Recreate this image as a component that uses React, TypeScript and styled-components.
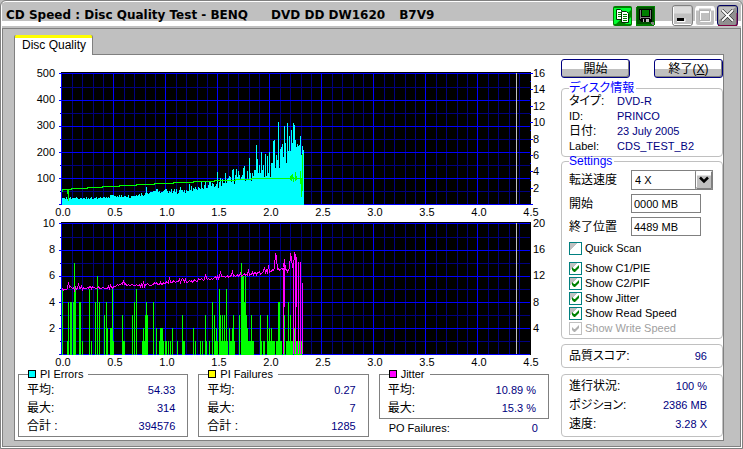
import React, { useState } from 'react';
import styled, { createGlobalStyle, css } from 'styled-components';

const GlobalStyle = createGlobalStyle`
  *, *::before, *::after { box-sizing: border-box; }
  body {
    margin: 0;
    background: #c0c0c0;
    color: #000;
    font: 11px/15px "Liberation Sans", "Noto Sans CJK JP", sans-serif;
    font-feature-settings: "palt";
  }
  button, input, select { font: inherit; color: inherit; margin: 0; border-radius: 0; }
`;

/* ---------- window frame ---------- */

const Window = styled.div`
  min-height: 100vh;
  display: flex;
  flex-direction: column;
  border: 1px solid #808080;
  border-radius: 6px 6px 0 0;
  box-shadow: inset 0 0 0 1px #fff;
  padding: 2px 1px 1px;
`;

const TitleBar = styled.header`
  display: flex;
  align-items: center;
  height: 25px;
  padding: 0 3px 0 4px;
  background: linear-gradient(#c0c0c0 0 18px, #fff 18px 23px, #c0c0c0 23px);
`;

const Title = styled.h1`
  flex: 1;
  display: flex;
  margin: 0;
  font-family: "DejaVu Sans", sans-serif;
  font-size: 12px;
  line-height: 25px;
  font-weight: bold;
  white-space: nowrap;
`;

const Model = styled.span`
  padding: 0 14px 0 23px;
`;

const TitleTools = styled.div`
  display: flex;
  gap: 4px;
  margin-right: 17px;
`;

const TitleControls = styled.div`
  display: flex;
  gap: 2px;
`;

const IconButton = styled.button`
  display: block;
  padding: 0;
  border: 0;
  background: none;
  svg { display: block; }
`;

const Client = styled.main`
  flex: 1;
  display: flex;
  flex-direction: column;
  padding: 6px 16px 5px 11px;
  background: #c0c0c0;
  border: 1px solid #808080;
`;

const Tab = styled.button`
  align-self: flex-start;
  height: 20px;
  margin-bottom: -1px;
  padding: 0 7px;
  width: 79px;
  border: 1px solid #808080;
  border-top: 0;
  border-bottom: 0;
  border-radius: 2px 2px 0 0;
  background: linear-gradient(#ffff00 0 3px, #fff 3px);
  text-align: left;
  white-space: nowrap;
  font-size: 12px;
  line-height: 20px;
  z-index: 1;
`;

const Page = styled.section`
  flex: 1;
  display: flex;
  gap: 12px;
  padding: 4px 0 3px 3px;
  border: 1px solid #808080;
  background: #fff;
`;

const Results = styled.div`
  flex: 1;
  min-width: 0;
  padding-top: 8px;
`;

const Sidebar = styled.aside`
  width: 162px;
  flex: none;
  display: flex;
  flex-direction: column;
`;

/* ---------- charts ---------- */

const ChartSvg = styled.svg`
  display: block;
  width: 100%;
  height: auto;
  overflow: visible;
  font-size: 11px;
`;

const PLOT_X = 43;
const PLOT_Y = 5;
const PLOT_W = 470;
const PLOT_H = 133;
const BASE_Y = 137;
const DATA_X = 44;

const vLines = Array.from({ length: 45 }, (_, k) => ({ x: Math.floor(43.9 + 10.4 * k), major: k % 5 === 0 }));
const hLines = [6, 20, 33, 46, 59, 72, 85, 98, 111, 124, 137].map((y, k) => ({ y, major: k % 2 === 0 }));

type Tick = { y: number; label: string };

function Chart(props: {
  title: string;
  left: string[];
  right: Tick[];
  rightTicks?: boolean;
  children: React.ReactNode;
}) {
  return (
    <ChartSvg viewBox="0 0 531 150" role="img" aria-label={props.title}>
      <rect x={PLOT_X} y={PLOT_Y} width={PLOT_W} height={PLOT_H} fill="#000" />
      <g shapeRendering="crispEdges">
        {vLines.filter((l) => !l.major).map((l) => (
          <rect key={l.x} x={l.x} y={6} width={1} height={131} fill="#000080" />
        ))}
        {hLines.map((l) => (
          <rect key={l.y} x={l.major ? 41 : 42} y={l.y} width={l.major ? 471 : 470} height={1} fill={l.major ? '#0000ff' : '#000080'} />
        ))}
        {vLines.filter((l) => l.major).map((l) => (
          <rect key={l.x} x={l.x} y={6} width={1} height={131} fill="#0000ff" />
        ))}
        <rect x={498} y={6} width={1} height={131} fill="#c0c0c0" />
        {props.children}
        {props.rightTicks &&
          Array.from({ length: 17 }, (_, k) => (
            <rect key={k} x={512} y={Math.round(6 + k * 8.2)} width={k % 2 ? 1 : 3} height={1} fill="#0000ff" />
          ))}
      </g>
      {props.left.map((label, i) => (
        <text key={label} x={37} y={10 + Math.round(i * 26.2)} textAnchor="end">{label}</text>
      ))}
      {props.right.map((t) => (
        <text key={t.label} x={515} y={t.y + 4}>{t.label}</text>
      ))}
      {Array.from({ length: 10 }, (_, k) => (
        <text key={k} x={45 + k * 52} y={149} textAnchor="middle">{(k / 2).toFixed(1)}</text>
      ))}
    </ChartSvg>
  );
}

/* Repeatable noise in the range 0..1 */
const noise = (i: number) => {
  const v = Math.sin(i * 127.1 + 11.7) * 43758.5453;
  return v - Math.floor(v);
};

const interpolate = (points: number[][], x: number) => {
  for (let i = 1; i < points.length; i++) {
    const [x0, y0] = points[i - 1];
    const [x1, y1] = points[i];
    if (x <= x1) return y0 + ((y1 - y0) * (x - x0)) / (x1 - x0);
  }
  return points[points.length - 1][1];
};

const COLUMNS = 242;

/* PI error level by column, in plot pixels, then the single peaks above it */
const pieLevel = [[0, 5], [30, 5], [50, 7], [68, 7], [85, 9], [100, 12], [118, 11], [135, 15], [148, 17], [158, 17], [168, 22], [181, 22], [194, 26], [201, 27], [208, 29], [214, 34], [221, 43], [228, 45], [234, 47], [241, 52]];
const piePeaks: Record<number, number> = {
  84: 17, 94: 15, 118: 17, 127: 20, 133: 17, 139: 22, 143: 23, 148: 23, 155: 32, 158: 26, 160: 25, 163: 31, 167: 28, 168: 27,
  170: 34, 171: 35, 174: 35, 176: 33, 179: 27, 181: 36, 182: 38, 185: 33, 187: 46, 191: 28, 194: 59, 195: 45, 197: 39, 199: 52,
  201: 39, 203: 50, 205: 48, 207: 52, 209: 41, 211: 63, 212: 64, 214: 49, 216: 82, 218: 55, 219: 57, 220: 60, 222: 78, 223: 61,
  225: 81, 226: 53, 227: 68, 229: 74, 231: 81, 232: 79, 233: 64, 235: 60, 236: 58, 237: 59, 238: 68, 240: 58, 241: 54,
};

const piePath = Array.from({ length: COLUMNS }, (_, i) => {
  const level = interpolate(pieLevel, i);
  const h = piePeaks[i] ?? Math.round(level * (0.9 + 0.45 * noise(i)));
  return `M${DATA_X + i} ${BASE_Y + 1}v${-h - 1}h1v${h + 1}z`;
}).join('');

const speedPath =
  'M44.5 125V122.5H53V121.5H69V120.5H84V119.5H101V118.5H118V117.5H136V116.5H155V115.5H175V114.5H196V113.5H217V112.5H233V111.5H272' +
  'M49.5 122V127M50.5 122V134';

const speedTail =
  'M264 111.5H284M272.5 109V113M273.5 108V114M274.5 107V112M275.5 110V115M277.5 105V114M278.5 109V113M282.5 104V117M283.5 111V130M284.5 87V124';

/* PI failures: [column, count] */
const pif: [number, number][] = [
  [0, 5], [5, 1], [6, 4], [8, 4], [9, 4], [11, 4], [12, 7], [13, 5], [17, 4], [18, 4], [20, 1], [27, 5], [29, 1], [33, 4], [35, 6],
  [37, 4], [42, 3], [44, 4], [45, 2], [48, 2], [49, 2], [50, 5], [51, 1], [60, 3], [61, 1], [62, 1], [70, 3], [72, 4], [74, 5],
  [80, 1], [81, 2], [82, 1], [83, 3], [84, 4], [85, 3], [91, 4], [94, 2], [97, 1], [98, 2], [99, 2], [100, 2], [101, 1], [103, 1],
  [104, 1], [106, 1], [108, 1], [110, 2], [115, 1], [120, 3], [121, 1], [122, 1], [131, 2], [133, 1], [138, 1], [140, 1], [143, 3],
  [144, 1], [147, 1], [150, 4], [152, 3], [153, 1], [154, 2], [155, 1], [157, 5], [158, 3], [159, 1], [160, 3], [161, 1], [162, 3],
  [163, 1], [164, 5], [165, 1], [167, 2], [168, 1], [169, 1], [170, 2], [171, 3], [172, 1], [177, 3], [179, 7], [180, 6], [181, 6],
  [182, 4], [183, 6], [184, 3], [185, 2], [186, 1], [187, 1], [188, 1], [189, 3], [190, 1], [191, 1], [198, 3], [199, 1], [201, 1],
  [202, 1], [205, 3], [206, 1], [207, 2], [208, 1], [209, 2], [210, 1], [211, 1], [212, 1], [214, 1], [215, 1], [216, 4], [217, 4],
  [218, 1], [219, 1], [221, 5], [222, 3], [224, 1], [225, 1], [226, 4], [227, 1], [228, 3], [229, 1], [230, 1], [232, 2], [233, 1],
  [234, 1], [235, 1], [236, 1], [237, 1], [238, 1], [239, 1],
];

const pifPath = pif.map(([i, n]) => `M${DATA_X + i} ${BASE_Y + 1}v${-n * 13 - 1}h1v${n * 13 + 1}z`).join('');

const jitterLevel = [[0, 72], [4, 72], [6, 69], [12, 71], [20, 70], [50, 69], [56, 67], [61, 66], [68, 67], [84, 67], [100, 65], [118, 63], [128, 63], [144, 61], [158, 59], [168, 58], [181, 57], [198, 55], [208, 53], [213, 50], [217, 52], [222, 51], [225, 53], [228, 49], [231, 48], [235, 38]];
const jitterPeaks: Record<number, number> = { 6: 65, 16: 66, 61: 63, 81: 64, 107: 60, 120: 61, 143: 57, 158: 54, 170: 54, 186: 52, 202: 50, 206: 48, 213: 36, 214: 40, 222: 42, 228: 36, 229: 41, 232: 36, 233: 38 };

const jitterPath = Array.from({ length: 235 }, (_, i) => {
  const y = jitterPeaks[i] ?? Math.round(interpolate(jitterLevel, i) - 1 + 3 * noise(i + 900));
  return `${i ? 'L' : 'M'}${DATA_X + i + 0.5} ${y + 0.5}`;
}).join('');

const jitterDrops = 'M265.5 52V137M266.5 42V90M275.5 48V137M278.5 40V90M280.5 45V137M282.5 45V137M284.5 66V137M277.5 40V137';

const speedTicks: Tick[] = [16, 14, 12, 10, 8, 6, 4, 2].map((n, i) => ({ label: String(n), y: Math.round(6 + i * 16.4) }));
const jitterTicks: Tick[] = [20, 16, 12, 8, 4].map((n, i) => ({ label: String(n), y: Math.round(6 + i * 26.2) }));

/* ---------- statistics ---------- */

const Stats = styled.div`
  display: grid;
  grid-template-columns: repeat(3, minmax(0, 1fr));
  align-items: start;
  gap: 10px;
`;

const StatBox = styled.fieldset`
  min-width: 0;
  margin: 0;
  padding: 0 12px 1px 8px;
  border: 1px solid #808080;
`;

const StatLegend = styled.legend`
  display: flex;
  align-items: center;
  gap: 4px;
  height: 14px;
  padding: 0 5px 0 0;
  margin-left: 1px;
  line-height: 14px;
`;

const Swatch = styled.span<{ $color: string }>`
  width: 8px;
  height: 8px;
  border: 1px solid #000;
  background: ${(p) => p.$color};
`;

const List = styled.dl`
  margin: 0;
`;

const Row = styled.div<{ $h: number }>`
  display: flex;
  justify-content: space-between;
  height: ${(p) => p.$h}px;
  line-height: ${(p) => p.$h}px;
  white-space: nowrap;
`;

const Term = styled.dt<{ $w?: number; $latin?: boolean }>`
  font-size: ${(p) => (p.$latin ? 11 : 12)}px;
  ${(p) => p.$w && css`width: ${p.$w}px; flex: none;`}
`;

const Value = styled.dd<{ $start?: boolean }>`
  margin: 0;
  color: #000080;
  ${(p) => p.$start && css`flex: 1;`}
`;

const OutsideRow = styled(List)`
  padding: 0 11px 0 10px;
`;

function Stat({ name, color, rows }: { name: string; color: string; rows: [string, string][] }) {
  return (
    <StatBox>
      <StatLegend><Swatch $color={color} />{name}</StatLegend>
      <List>
        {rows.map(([k, v]) => (
          <Row key={k} $h={18}><Term>{k}</Term><Value>{v}</Value></Row>
        ))}
      </List>
    </StatBox>
  );
}

/* ---------- sidebar ---------- */

const Actions = styled.div`
  display: flex;
  justify-content: space-between;
  margin-bottom: 4px;
`;

const ActionButton = styled.button`
  width: 69px;
  height: 19px;
  padding: 0;
  border: 1px solid #000080;
  border-radius: 3px;
  background: linear-gradient(#fff 0 9px, #c0c0c0 9px);
  box-shadow: inset -1px -1px 0 #808080;
  font-size: 12px;
  line-height: 16px;
`;

const Group = styled.fieldset<{ $pull?: boolean }>`
  min-width: 0;
  margin: ${(p) => (p.$pull ? '-2px' : '0')} 0 0;
  padding: 0 8px 2px 7px;
  border: 1px solid #c0c0c0;
  border-radius: 4px;
`;

const GroupLegend = styled.legend`
  height: 12px;
  padding: 0 2px 0 0;
  color: #0000ff;
  font-size: 12px;
  line-height: 12px;
`;

const Card = styled.section<{ $gap: number; $pad: number }>`
  margin-top: ${(p) => p.$gap}px;
  padding: ${(p) => p.$pad}px 15px ${(p) => p.$pad}px 7px;
  border: 1px solid #c0c0c0;
  border-radius: 4px;
`;

const Fields = styled.div`
  display: grid;
  grid-template-columns: 62px 1fr;
  row-gap: 4px;
  align-items: center;
  padding-top: 3px;
`;

const FieldLabel = styled.label`
  font-size: 12px;
  line-height: 18px;
  white-space: nowrap;
`;

const TextInput = styled.input`
  width: 70px;
  height: 19px;
  padding: 0 2px;
  border: 1px solid #808080;
  background: #fff;
`;

const SelectWrap = styled.div`
  display: grid;
  grid-template-columns: 1fr 18px;
  width: 82px;
  height: 20px;
  svg { grid-area: 1 / 2; align-self: center; pointer-events: none; }
`;

const Select = styled.select`
  grid-area: 1 / 1 / 2 / 3;
  appearance: none;
  padding: 0 3px;
  border: 1px solid #808080;
  background: #fff;
`;

const Checks = styled.div`
  padding-top: 5px;
`;

const CheckLabel = styled.label<{ $apart?: boolean; $muted?: boolean }>`
  display: flex;
  align-items: center;
  gap: 3px;
  height: 15px;
  margin-bottom: ${(p) => (p.$apart ? 5 : 0)}px;
  color: ${(p) => (p.$muted ? '#a0a0a0' : '#000')};
  white-space: nowrap;
`;

const CheckBox = styled.span`
  display: grid;
  svg { grid-area: 1 / 1; place-self: center; pointer-events: none; }
`;

const CheckInput = styled.input`
  grid-area: 1 / 1;
  appearance: none;
  width: 13px;
  height: 13px;
  border: 1px solid #008080;
  background: linear-gradient(135deg, #c0c0c0 0 35%, #fff 35%);
  &:disabled { border-color: #c0c0c0; background: #fff; }
`;

function Check({ label, initial, disabled, apart }: { label: string; initial?: boolean; disabled?: boolean; apart?: boolean }) {
  const [on, setOn] = useState(!!initial);
  return (
    <CheckLabel $apart={apart} $muted={disabled}>
      <CheckBox>
        <CheckInput type="checkbox" checked={on} disabled={disabled} onChange={(e) => setOn(e.target.checked)} />
        {on && (
          <svg width="7" height="7" viewBox="0 0 7 7" aria-hidden="true">
            <path d="M0 2v3l2 2h1l4-4V0L3 4H2z" fill={disabled ? '#b0b0b0' : '#008000'} />
          </svg>
        )}
      </CheckBox>
      {label}
    </CheckLabel>
  );
}

/* ---------- icons ---------- */

const CopyIcon = () => (
  <svg width="19" height="20" viewBox="0 0 19 20" aria-hidden="true">
    <rect width="19" height="20" rx="2" fill="#008000" />
    <path d="M1 2h17v2L3 18H1z" fill="#00ff30" />
    <path d="M12 18l6-7v7z" fill="#00ff30" />
    <path d="M3.5 3.5h4l2 2v8h-6z" fill="#fff" stroke="#003000" />
    <path d="M5 6.500h3M5 8.500h3M5 10.500h3" stroke="#008000" />
    <path d="M8.500 5.500h5l2 2v9h-7z" fill="#fff" stroke="#003000" />
    <path d="M10 8.500h4M10 10.500h4M10 12.500h4M10 14.500h4" stroke="#008000" />
  </svg>
);

const SaveIcon = () => (
  <svg width="19" height="20" viewBox="0 0 19 20" aria-hidden="true" shapeRendering="crispEdges">
    <rect width="19" height="20" rx="2" fill="#008000" />
    <rect x="1" y="1" width="17" height="17" fill="#005000" />
    <path d="M3 3h13v13H5l-2-2z" fill="#000" />
    <path d="M6 4h7v6H6z" fill="#008000" />
    <path d="M4 4h1v9H4zM14 4h1v9h-1zM5 11h9v1H5z" fill="#808080" />
    <path d="M7 13h6v3H7z" fill="#c0c0c0" />
    <path d="M8 13h2v3H8z" fill="#000" />
    <path d="M15 16h3v3h-2v-1h-1z" fill="#808080" />
  </svg>
);

const MinimizeIcon = () => (
  <svg width="21" height="21" viewBox="0 0 21 21" aria-hidden="true">
    <rect x=".5" y=".5" width="20" height="20" rx="2.500" fill="#c0c0c0" stroke="#808080" />
    <path d="M2 1.500h17v7H2z" fill="#dcdcdc" />
    <path d="M1.500 19V2M2 19.500h17" stroke="#fff" />
    <rect x="5" y="13" width="7" height="3" fill="#000" />
    <path d="M5 16.500h8v-3" fill="none" stroke="#fff" />
  </svg>
);

const MaximizeIcon = () => (
  <svg width="20" height="21" viewBox="0 0 20 21" aria-hidden="true">
    <rect x=".5" y="1.500" width="19" height="19" rx="2.500" fill="#c0c0c0" stroke="#fff" />
    <path d="M1 2.500h18M1 4.500h3M16 4.500h3" stroke="#fff" strokeWidth="2" />
    <path d="M5.500 16.500v-10h10v10z" fill="none" stroke="#fff" />
    <path d="M4.500 15.500v-10h10v10z" fill="none" stroke="#b0b0b0" />
    <path d="M5 7h9" stroke="#fff" strokeWidth="2" />
  </svg>
);

const CloseIcon = () => (
  <svg width="21" height="21" viewBox="0 0 21 21" aria-hidden="true">
    <rect x=".5" y=".5" width="20" height="20" rx="2.500" fill="#909090" stroke="#000060" />
    <path d="M1 20.500h19V8" fill="none" stroke="#800040" />
    <path d="M2 2h17L2 15z" fill="#c0c0c0" />
    <path d="M5 5l11 11M16 5L5 16" stroke="#000" strokeWidth="3" />
    <path d="M5 5l11 11M16 5L5 16" stroke="#fff" strokeWidth="2" />
  </svg>
);

const DropIcon = () => (
  <svg width="18" height="20" viewBox="0 0 18 20" aria-hidden="true">
    <rect x=".5" y=".5" width="17" height="19" rx="1" fill="#c0c0c0" stroke="#808080" />
    <path d="M1.500 17V1.500H16V5H1.500" fill="#fff" stroke="#fff" />
    <path d="M16.500 2v16.500H2" fill="none" stroke="#808080" />
    <path d="M5 7.500l4 4 4-4" fill="none" stroke="#000" strokeWidth="2.500" />
  </svg>
);

/* ---------- application ---------- */

const discInfo: { term: string; value: string; latin?: boolean }[] = [
  { term: 'タイプ:', value: 'DVD-R' },
  { term: 'ID:', value: 'PRINCO', latin: true },
  { term: '日付:', value: '23 July 2005' },
  { term: 'Label:', value: 'CDS_TEST_B2', latin: true },
];
const progress = [['進行状況:', '100 %'], ['ポジション:', '2386 MB'], ['速度:', '3.28 X']];

export default function App() {
  return (
    <>
      <GlobalStyle />
      <Window>
        <TitleBar>
          <Title>
            <span>CD Speed : Disc Quality Test - BENQ</span>
            <Model>DVD DD DW1620</Model>
            <span>B7V9</span>
          </Title>
          <TitleTools>
            <IconButton aria-label="Copy"><CopyIcon /></IconButton>
            <IconButton aria-label="Save"><SaveIcon /></IconButton>
          </TitleTools>
          <TitleControls>
            <IconButton aria-label="Minimize"><MinimizeIcon /></IconButton>
            <IconButton aria-label="Maximize"><MaximizeIcon /></IconButton>
            <IconButton aria-label="Close"><CloseIcon /></IconButton>
          </TitleControls>
        </TitleBar>
        <Client>
          <Tab>Disc Quality</Tab>
          <Page>
            <Results>
              <Chart title="PI Errors" left={['500', '400', '300', '200', '100']} right={speedTicks} rightTicks>
                <path d={piePath} fill="#00ffff" />
                <path d={speedPath} fill="none" stroke="#00ff00" />
                <path d={speedTail} fill="none" stroke="#00ff00" />
              </Chart>
              <Chart title="PI Failures, Jitter" left={['10', '8', '6', '4', '2']} right={jitterTicks}>
                <path d={pifPath} fill="#00ff00" />
                <path d={jitterPath} fill="none" stroke="#ff00ff" />
                <path d={jitterDrops} fill="none" stroke="#ff00ff" />
              </Chart>
              <Stats>
                <Stat name="PI Errors" color="#00ffff" rows={[['平均:', '54.33'], ['最大:', '314'], ['合計 :', '394576']]} />
                <Stat name="PI Failures" color="#ffff00" rows={[['平均:', '0.27'], ['最大:', '7'], ['合計 :', '1285']]} />
                <div>
                  <Stat name="Jitter" color="#ff00ff" rows={[['平均:', '10.89 %'], ['最大:', '15.3 %']]} />
                  <OutsideRow><Row $h={18}><Term $latin>PO Failures:</Term><Value>0</Value></Row></OutsideRow>
                </div>
              </Stats>
            </Results>
            <Sidebar>
              <Actions>
                <ActionButton>開始</ActionButton>
                <ActionButton>終了(<u>X</u>)</ActionButton>
              </Actions>
              <Group>
                <GroupLegend>ディスク情報</GroupLegend>
                <List>
                  {discInfo.map((d) => (
                    <Row key={d.term} $h={15}><Term $w={48} $latin={d.latin}>{d.term}</Term><Value $start>{d.value}</Value></Row>
                  ))}
                </List>
              </Group>
              <Group $pull>
                <GroupLegend>Settings</GroupLegend>
                <Fields>
                  <FieldLabel htmlFor="speed">転送速度</FieldLabel>
                  <SelectWrap>
                    <Select id="speed" defaultValue="4 X"><option>4 X</option><option>8 X</option></Select>
                    <DropIcon />
                  </SelectWrap>
                  <FieldLabel htmlFor="start">開始</FieldLabel>
                  <TextInput id="start" defaultValue="0000 MB" />
                  <FieldLabel htmlFor="end">終了位置</FieldLabel>
                  <TextInput id="end" defaultValue="4489 MB" />
                </Fields>
                <Checks>
                  <Check label="Quick Scan" apart />
                  <Check label="Show C1/PIE" initial />
                  <Check label="Show C2/PIF" initial />
                  <Check label="Show Jitter" initial />
                  <Check label="Show Read Speed" initial />
                  <Check label="Show Write Speed" initial disabled />
                </Checks>
              </Group>
              <Card $gap={5} $pad={2}>
                <List><Row $h={18}><Term>品質スコア:</Term><Value>96</Value></Row></List>
              </Card>
              <Card $gap={6} $pad={2}>
                <List>
                  {progress.map(([k, v]) => (
                    <Row key={k} $h={19}><Term>{k}</Term><Value>{v}</Value></Row>
                  ))}
                </List>
              </Card>
            </Sidebar>
          </Page>
        </Client>
      </Window>
    </>
  );
}
